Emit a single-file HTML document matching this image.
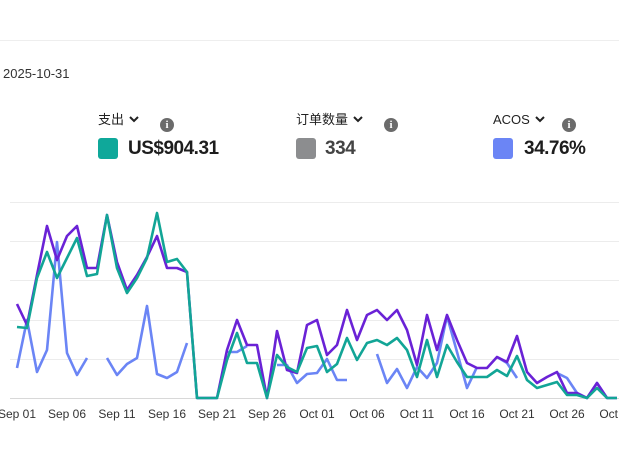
<!DOCTYPE html>
<html><head><meta charset="utf-8"><style>
body{margin:0;width:619px;height:464px;background:#fff;position:relative;overflow:hidden;font-family:"Liberation Sans","Noto Sans CJK SC",sans-serif;color:#222}
.a{position:absolute}
.lbl{font-size:13px;color:#222;top:112px;line-height:16px;height:16px;white-space:nowrap}
.lbl svg{vertical-align:middle;margin-left:5px;margin-top:-3px}
.val{font-size:19px;font-weight:bold;top:138px;color:#1d1d1d;letter-spacing:-0.5px;line-height:22px}
.sw{width:20px;height:21px;border-radius:3px;top:138px}
.ic{width:14px;height:14px;border-radius:50%;background:#6b6b6b;color:#fff;font-size:11px;font-weight:bold;text-align:center;line-height:14px;top:118px;font-family:"Liberation Serif",serif}
</style></head><body>
<div class="a" style="left:0;top:40px;width:619px;height:1px;background:#eeeeee"></div>
<div class="a" style="left:3px;top:66px;font-size:13px;color:#333">2025-10-31</div>

<div class="a lbl" style="left:98px">支出<svg width="10" height="8"><polyline points="1,2 5,6 9,2" fill="none" stroke="#222" stroke-width="2"/></svg></div>
<div class="a ic" style="left:160px">i</div>
<div class="a sw" style="left:98px;background:#0fa89a"></div>
<div class="a val" style="left:128px">US$904.31</div>

<div class="a lbl" style="left:296px">订单数量<svg width="10" height="8"><polyline points="1,2 5,6 9,2" fill="none" stroke="#222" stroke-width="2"/></svg></div>
<div class="a ic" style="left:384px">i</div>
<div class="a sw" style="left:296px;background:#8c8d8f"></div>
<div class="a val" style="left:325px;color:#444">334</div>

<div class="a lbl" style="left:493px">ACOS<svg width="10" height="8"><polyline points="1,2 5,6 9,2" fill="none" stroke="#222" stroke-width="2"/></svg></div>
<div class="a ic" style="left:562px">i</div>
<div class="a sw" style="left:493px;background:#6b85f5"></div>
<div class="a val" style="left:524px">34.76%</div>

<svg class="a" style="left:0;top:0" width="619" height="464">
<g stroke="#ececec" stroke-width="1">
<line x1="10" y1="202.5" x2="619" y2="202.5"/><line x1="10" y1="241.5" x2="619" y2="241.5"/><line x1="10" y1="280.5" x2="619" y2="280.5"/><line x1="10" y1="320.5" x2="619" y2="320.5"/><line x1="10" y1="359.5" x2="619" y2="359.5"/>
</g>
<line x1="10" y1="398.5" x2="619" y2="398.5" stroke="#d8d8d8"/>
<g fill="none" stroke-width="2.6" stroke-linejoin="round">
<polyline stroke="#6b85f5" points="17,368 27,320 37,372 47,350 57,242 67,353 77,375 87,358"/>
<polyline stroke="#6b85f5" points="107,358 117,375 127,364 137,358 147,306 157,374 167,378 177,372 187,343"/>
<polyline stroke="#6b85f5" points="227,352 237,352 247,346"/>
<polyline stroke="#6b85f5" points="277,365 287,365 297,383 307,374 317,373 327,359 337,380 347,380"/>
<polyline stroke="#6b85f5" points="377,354 387,383 397,369 407,388 417,367 427,378 437,363 447,316 457,352 467,388 477,367"/>
<polyline stroke="#6b85f5" points="497,357 507,363 517,378"/>
<polyline stroke="#6b85f5" points="557,373 567,378 577,393 587,398 597,383 607,398"/>
<polyline stroke="#6a22d6" points="17,304 27,325 37,275 47,226 57,260 67,236 77,226 87,268 97,268 107,215 117,262 127,290 137,275 147,257 157,236 167,268 177,268 187,272 197,398 207,398 217,398 227,350 237,320 247,345 257,345 267,398 277,331 287,370 297,373 307,325 317,320 327,355 337,345 347,310 357,340 367,315 377,310 387,320 397,310 407,330 417,365 427,315 437,350 447,315 457,340 467,363 477,368 487,368 497,357 507,362 517,336 527,372 537,383 547,377 557,372 567,393 577,393 587,398 597,383 607,398 617,398"/>
<polyline stroke="#12a596" points="17,327 27,328 37,278 47,252 57,278 67,258 77,238 87,276 97,274 107,215 117,268 127,293 137,278 147,258 157,213 167,262 177,259 187,272 197,398 207,398 217,398 227,360 237,333 247,363 257,363 267,398 277,355 287,367 297,372 307,348 317,346 327,372 337,364 347,338 357,360 367,343 377,340 387,345 397,338 407,350 417,377 427,340 437,377 447,345 457,362 467,377 477,377 487,377 497,370 507,376 517,356 527,380 537,388 547,385 557,382 567,395 577,395 587,398 597,388 607,398 617,398"/>
</g>
<g font-size="12" fill="#333" text-anchor="middle" font-family="Liberation Sans, sans-serif">
<text x="17" y="418">Sep 01</text><text x="67" y="418">Sep 06</text><text x="117" y="418">Sep 11</text><text x="167" y="418">Sep 16</text><text x="217" y="418">Sep 21</text><text x="267" y="418">Sep 26</text><text x="317" y="418">Oct 01</text><text x="367" y="418">Oct 06</text><text x="417" y="418">Oct 11</text><text x="467" y="418">Oct 16</text><text x="517" y="418">Oct 21</text><text x="567" y="418">Oct 26</text><text x="617" y="418">Oct 31</text>
</g>
</svg>
</body></html>
